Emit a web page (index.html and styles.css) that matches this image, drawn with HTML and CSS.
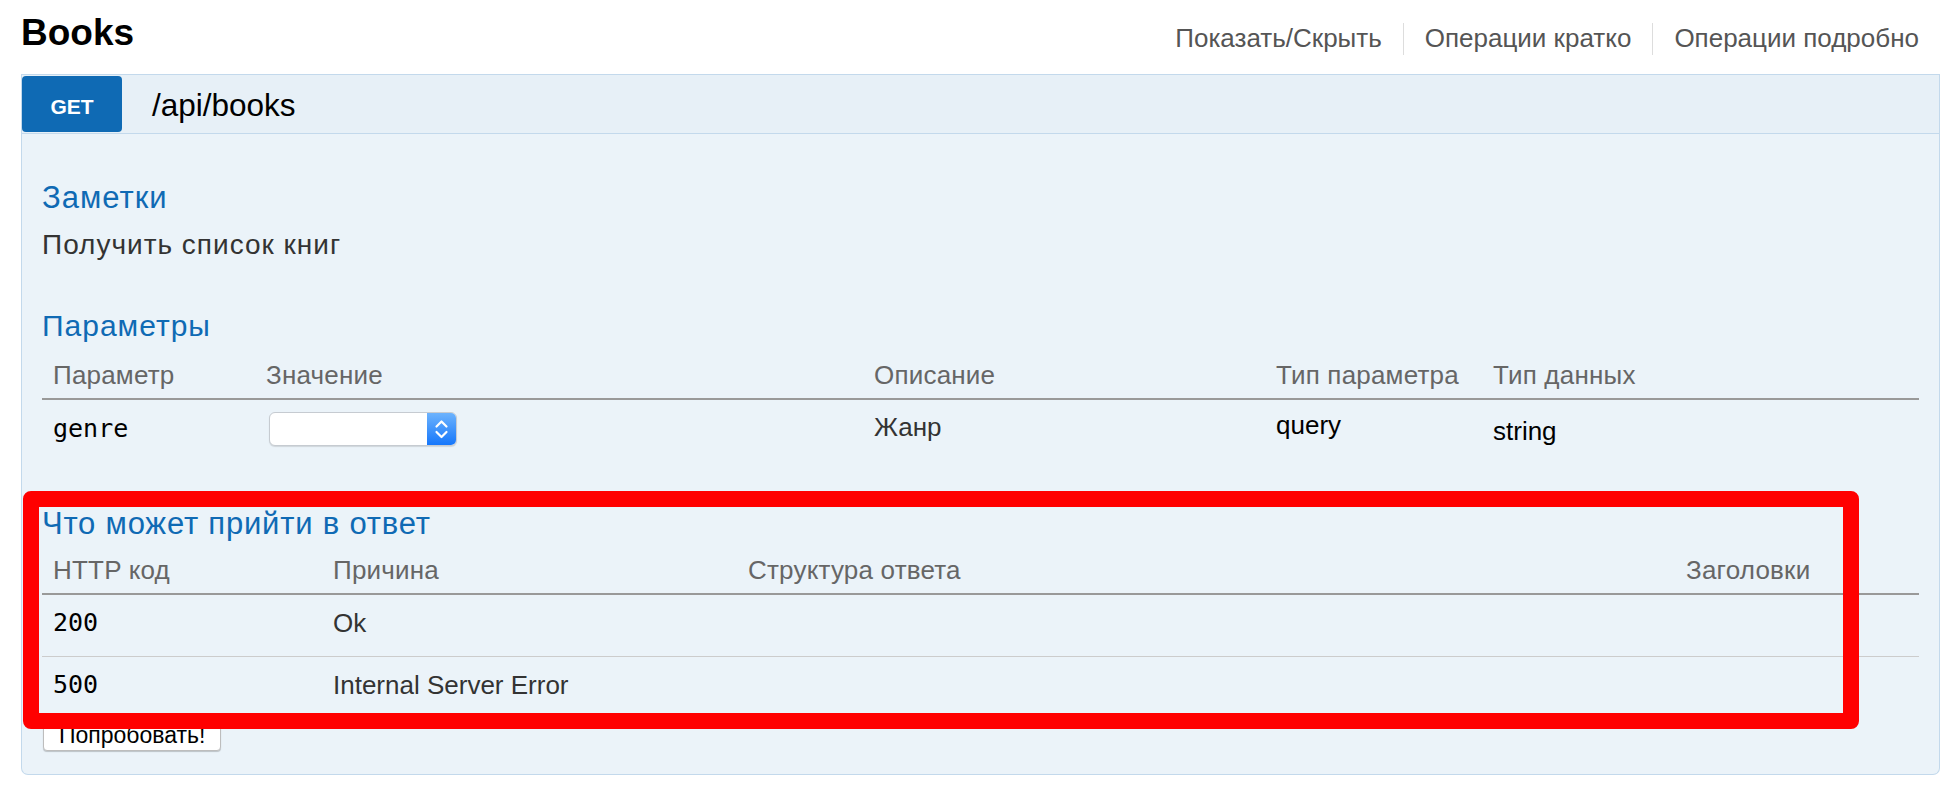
FILE: index.html
```html
<!DOCTYPE html>
<html lang="ru">
<head>
<meta charset="utf-8">
<title>Books</title>
<link rel="stylesheet" href="styles.css">
</head>
<body>
<div class="page">
  <div class="resource-head">
    <h2 class="resource-title">Books</h2>
    <ul class="resource-links">
      <li class="link">Показать/Скрыть</li>
      <li class="link sep">Операции кратко</li>
      <li class="link sep">Операции подробно</li>
    </ul>
  </div>

  <div class="operation">
    <div class="op-head">
      <span class="method">GET</span>
      <span class="path">/api/books</span>
    </div>
    <div class="op-body">
      <h4 class="section-title notes-title">Заметки</h4>
      <p class="notes">Получить список книг</p>

      <h4 class="section-title params-title">Параметры</h4>
      <table class="grid params">
        <colgroup>
          <col class="pc1"><col class="pc2"><col class="pc3"><col class="pc4"><col>
        </colgroup>
        <thead>
          <tr>
            <th>Параметр</th>
            <th>Значение</th>
            <th>Описание</th>
            <th>Тип параметра</th>
            <th>Тип данных</th>
          </tr>
        </thead>
        <tbody>
          <tr>
            <td class="code">genre</td>
            <td>
              <div class="select">
                <span class="select-arrow">
                  <svg width="29" height="34" viewBox="0 0 29 34"><path d="M9.5 14.5 L14.5 9.5 L19.5 14.5" fill="none" stroke="#fff" stroke-width="2.2" stroke-linecap="round" stroke-linejoin="round"/><path d="M9.5 20 L14.5 25 L19.5 20" fill="none" stroke="#fff" stroke-width="2.2" stroke-linecap="round" stroke-linejoin="round"/></svg>
                </span>
              </div>
            </td>
            <td class="text">Жанр</td>
            <td class="plain ptype">query</td>
            <td class="plain dtype">string</td>
          </tr>
        </tbody>
      </table>

      <h4 class="section-title resp-title">Что может прийти в ответ</h4>
      <table class="grid responses">
        <colgroup>
          <col class="rc1"><col class="rc2"><col class="rc3"><col>
        </colgroup>
        <thead>
          <tr>
            <th>HTTP код</th>
            <th>Причина</th>
            <th>Структура ответа</th>
            <th>Заголовки</th>
          </tr>
        </thead>
        <tbody>
          <tr>
            <td class="code">200</td>
            <td class="text">Ok</td>
            <td></td>
            <td></td>
          </tr>
          <tr>
            <td class="code">500</td>
            <td class="text">Internal Server Error</td>
            <td></td>
            <td></td>
          </tr>
        </tbody>
      </table>

      <button class="try" type="button">Попробовать!</button>
    </div>
  </div>

  <div class="highlight"></div>
</div>
</body>
</html>
```

FILE: styles.css
```css
html, body {
  margin: 0;
  padding: 0;
  background: #ffffff;
}

body {
  font-family: "Liberation Sans", Arial, Helvetica, sans-serif;
  color: #333;
}

.page {
  position: relative;
  padding: 11px 12px 0 21px;
}

/* ---------- resource heading ---------- */
.resource-head {
  display: flex;
  justify-content: space-between;
  align-items: flex-end;
  height: 44px;
}

.resource-title {
  margin: 0;
  font-size: 37px;
  line-height: 44px;
  font-weight: bold;
  color: #000;
}

.resource-links {
  display: flex;
  margin: 0;
  padding: 0;
  list-style: none;
}

.link {
  font-size: 26px;
  line-height: 31px;
  color: #555;
  padding: 0 21px 1px;
}

.link.sep {
  border-left: 1px solid #dddddd;
}

/* ---------- operation panel ---------- */
.operation {
  margin-top: 19px;
}

.op-head {
  display: flex;
  align-items: center;
  height: 57px;
  padding-top: 1px;
  background: #e7f0f7;
  border: 1px solid #c3d9ec;
}

.method {
  align-self: flex-start;
  display: flex;
  align-items: center;
  justify-content: center;
  width: 100px;
  height: 56px;
  box-sizing: border-box;
  padding-top: 5px;
  background: #0f6ab4;
  color: #fff;
  font-size: 21px;
  font-weight: bold;
  border-radius: 4px;
}

.path {
  margin-left: 30px;
  font-size: 31.5px;
  line-height: 36px;
  color: #000;
}

.op-body {
  background: #ebf3f9;
  border: 1px solid #c3d9ec;
  border-top: none;
  border-radius: 0 0 7px 7px;
  padding: 46px 20px 23px 20px;
}

.section-title {
  margin: 0;
  font-size: 30px;
  line-height: 36px;
  letter-spacing: 1px;
  font-weight: normal;
  color: #0f6ab4;
}

.notes-title {
  font-size: 31px;
}

.notes {
  margin: 12px 0 0;
  font-size: 28px;
  line-height: 34px;
  letter-spacing: 1px;
  color: #333;
}

.params-title {
  margin-top: 46px;
}

.resp-title {
  margin-top: 41px;
  margin-bottom: 0;
  font-size: 31px;
  letter-spacing: 0.8px;
}

/* ---------- tables ---------- */
.grid {
  width: 100%;
  border-collapse: separate;
  border-spacing: 0;
  table-layout: fixed;
}

.pc1 { width: 213px; }
.pc2 { width: 608px; }
.pc3 { width: 402px; }
.pc4 { width: 217px; }

.rc1 { width: 280px; }
.rc2 { width: 415px; }
.rc3 { width: 938px; }

.grid th {
  text-align: left;
  font-weight: normal;
  font-size: 26px;
  line-height: 30px;
  letter-spacing: 0.2px;
  color: #666;
  padding: 13px 11px 8px;
  border-bottom: 2px solid #999;
  white-space: nowrap;
}

.params th {
  padding-top: 16px;
}

.grid td {
  vertical-align: top;
  font-size: 26px;
  line-height: 30px;
  padding: 12px 11px 19px;
  white-space: nowrap;
}

.responses td {
  padding-top: 13px;
  padding-bottom: 18px;
}

.responses tr:first-child td {
  border-bottom: 1px solid #cccccc;
}

.code {
  font-family: "DejaVu Sans Mono", "Liberation Mono", monospace;
  color: #000;
}

.grid td.code {
  font-size: 25px;
}

.params td.code {
  padding-top: 14px;
}

.text {
  color: #333;
}

.plain {
  color: #000;
}

.params td.ptype {
  padding-top: 10px;
}

.params td.dtype {
  padding-top: 16px;
}

/* ---------- select ---------- */
.select {
  display: flex;
  justify-content: flex-end;
  width: 188px;
  height: 34px;
  margin: 0 0 0 3px;
  box-sizing: border-box;
  background: #fff;
  border: 1px solid #c6cbd1;
  border-radius: 6px;
  overflow: hidden;
  box-shadow: 0 1px 1px rgba(0, 0, 0, 0.12);
}

.select-arrow {
  display: flex;
  align-items: center;
  justify-content: center;
  width: 29px;
  height: 100%;
  background: linear-gradient(#6db3fd, #1677fb);
}

.select-arrow svg {
  display: block;
}

/* ---------- button ---------- */
.try {
  display: block;
  margin-top: 2px;
  margin-left: 1px;
  font-family: "Liberation Sans", Arial, sans-serif;
  font-size: 23px;
  line-height: 25px;
  color: #000;
  background: #fff;
  border: 1px solid #bdbdbd;
  border-radius: 4px;
  padding: 2px 15px;
  box-shadow: 0 1px 1px rgba(0, 0, 0, 0.2);
}

/* ---------- annotation overlay ---------- */
.highlight {
  position: absolute;
  left: 23px;
  top: 491px;
  width: 1836px;
  height: 238px;
  box-sizing: border-box;
  border: 16px solid #ff0000;
  border-radius: 8px;
  pointer-events: none;
}
```
